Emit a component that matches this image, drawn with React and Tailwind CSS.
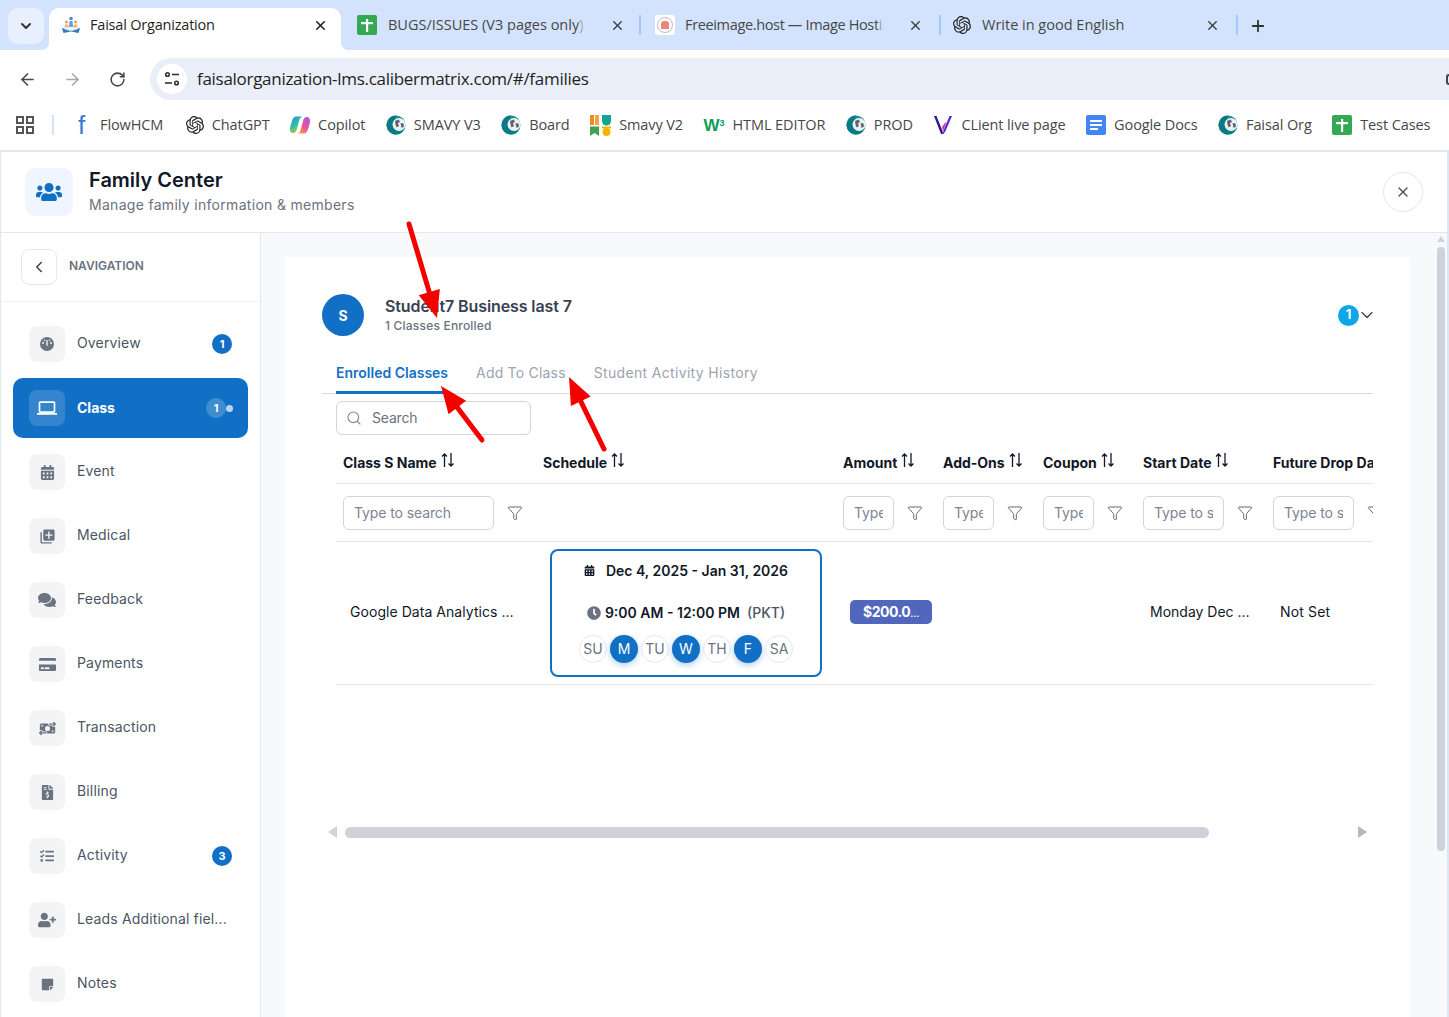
import { ChevronDown, ChevronLeft, ArrowLeft, ArrowRight, RotateCw, X, Plus, Search, Funnel } from "lucide-react";
import {
  FaUsers, FaCalendarAlt, FaComments, FaCreditCard, FaFileInvoiceDollar,
  FaTasks, FaUserPlus, FaStickyNote, FaClock,
} from "react-icons/fa";
import { FaMoneyBillTransfer } from "react-icons/fa6";
import { MdOutlineLaptop, MdLibraryAdd } from "react-icons/md";
import { SiOpenai } from "react-icons/si";

function SheetIcon({ size = 20 }) {
  return (
    <svg width={size} height={size} viewBox="0 0 20 20" className="shrink-0">
      <rect width="20" height="20" rx="2" fill="#34a853" />
      <rect x="9" y="4" width="2.2" height="13" fill="#fff" />
      <rect x="4" y="7" width="12" height="2.2" fill="#fff" />
    </svg>
  );
}

function GlobeIcon() {
  return (
    <svg width="20" height="20" viewBox="0 0 20 20" className="shrink-0">
      <circle cx="10" cy="10" r="9.500" fill="#0f8f98" />
      <path d="M10 .5A9.500 9.500 0 0 0 2 15c1 2 4 4.500 8 4.500 3 0 6-1.500 7.500-4-2 1.500-5 1.800-7 .5-2.500-1.500-3.500-4-3-7 .4-3 1.500-6 2.500-8.500z" fill="#0b7a84" />
      <circle cx="13" cy="9.500" r="6.500" fill="#eef0f1" />
      <path d="M9 6l3.500-1.500 1.500 2-2 2 1 2.500-2.500 1.500-1-3zM14.500 8l3 .5.500 3-2.500 1.500z" fill="#5d666d" />
    </svg>
  );
}

function CopilotIcon() {
  return (
    <svg width="20" height="20" viewBox="0 0 20 20" className="shrink-0">
      <defs>
        <linearGradient id="cpA" x1="0" y1="0" x2="0.6" y2="1">
          <stop offset="0" stopColor="#1f8fe8" />
          <stop offset="0.6" stopColor="#35c2a0" />
          <stop offset="1" stopColor="#f4c20d" />
        </linearGradient>
        <linearGradient id="cpB" x1="1" y1="0" x2="0.3" y2="1">
          <stop offset="0" stopColor="#a35be6" />
          <stop offset="0.6" stopColor="#ee4f9a" />
          <stop offset="1" stopColor="#f59a3c" />
        </linearGradient>
      </defs>
      <path d="M6 1.500h6.500c-1.500.5-2.500 1.500-3 3L7 14c-.6 2.500-1.800 4-4 4-1.800 0-3-1.500-3-4 0-2 1-5 2-8 .8-2.800 2-4.500 4-4.500z" fill="url(#cpA)" />
      <path d="M14 18.500H7.500c1.500-.5 2.500-1.500 3-3L13 6c.6-2.500 1.800-4 4-4 1.800 0 3 1.500 3 4 0 2-1 5-2 8-.8 2.800-2 4.500-4 4.500z" fill="url(#cpB)" />
    </svg>
  );
}

function SmavyV2Icon() {
  return (
    <svg width="21" height="21" viewBox="0 0 21 21" className="shrink-0">
      <rect x="0" y="0" width="4" height="10" fill="#f08a24" />
      <rect x="5" y="0" width="4" height="10" fill="#f4a340" />
      <path d="M12 0h9v6a4.500 4.500 0 0 1-9 0z" fill="#12a594" />
      <path d="M0 11.500h9V21l-4.500-3L0 21z" fill="#3fa34d" />
      <circle cx="16.500" cy="17" r="4" fill="#f4b400" />
      <rect x="12" y="11.500" width="9" height="2" fill="#f4b400" />
    </svg>
  );
}

function VIcon() {
  return (
    <svg width="20" height="20" viewBox="0 0 20 20" className="shrink-0">
      <path d="M1 1h2.500l6 15 .5 3H8z" fill="#2d1a8f" />
      <path d="M9.500 19l2-6 5-12H19l-6.500 15-2 3z" fill="#4f2bd0" />
      <path d="M9 12l3.500-5 .5 1.500-3 8z" fill="#e8338f" />
    </svg>
  );
}

function DocsIcon() {
  return (
    <svg width="20" height="20" viewBox="0 0 20 20" className="shrink-0">
      <rect width="20" height="20" rx="2" fill="#4285f4" />
      <rect x="4" y="5" width="12" height="2" fill="#fff" />
      <rect x="4" y="9" width="12" height="2" fill="#fff" />
      <rect x="4" y="13" width="8" height="2" fill="#fff" />
    </svg>
  );
}

function FaisalLogo() {
  return (
    <svg width="20" height="20" viewBox="0 0 20 20" className="shrink-0">
      <circle cx="10" cy="3.500" r="1.800" fill="#3f8fd6" />
      <path d="M8.500 6h3l.5 6H8z" fill="#5aa3de" />
      <circle cx="5.500" cy="7" r="1.500" fill="#e9a15a" />
      <circle cx="14.500" cy="7" r="1.500" fill="#e9a15a" />
      <path d="M4 9.500h3l1 3H3.500zM13 9.500h3l.5 3H12z" fill="#f0b47a" />
      <path d="M1 13l9 2.500L19 13l-1.500 5-7.500-1.500L2.500 18z" fill="#2f78b8" />
      <path d="M3 13.500l7 2 7-2-.5 1-6.500 2-6.500-2z" fill="#bcd9f0" />
    </svg>
  );
}

function FreeimageIcon() {
  return (
    <div className="w-5 h-5 rounded-[3px] bg-white flex items-center justify-center shrink-0">
      <div className="w-4 h-4 rounded-full border border-[#c9b9b5] flex items-center justify-center">
        <div className="w-2 h-2 rounded-t-[3px] bg-[#e8877c]" />
      </div>
    </div>
  );
}

function SiteInfoIcon() {
  return (
    <svg width="16" height="16" viewBox="0 0 16 16" fill="none" stroke="#333" strokeWidth="1.600">
      <circle cx="3.500" cy="3.500" r="1.800" />
      <path d="M8 3.500h7" />
      <circle cx="12.500" cy="12" r="1.800" />
      <path d="M1 12h7" />
    </svg>
  );
}

// round gauge used for the Overview item
function GaugeIcon({ size, className }) {
  return (
    <svg width={size} height={size} viewBox="0 0 14 14" className={className}>
      <circle cx="7" cy="7" r="7" fill="currentColor" />
      <rect x="6.300" y="3" width="1.400" height="6" rx="0.7" fill="#f3f4f6" />
      <circle cx="3" cy="6" r="1" fill="#f3f4f6" />
      <circle cx="11" cy="6" r="1" fill="#f3f4f6" />
      <circle cx="4.500" cy="3.200" r="0.8" fill="#f3f4f6" />
      <circle cx="9.500" cy="3.200" r="0.8" fill="#f3f4f6" />
    </svg>
  );
}

function Tab({ icon, title, titleClass = "", fade, width, pl, pr, gap }) {
  return (
    <div className={`flex items-center h-[42px] pb-2 mt-2 shrink-0 ${width} ${pl} ${pr} ${gap}`}>
      {icon}
      <span className={`relative flex-1 min-w-0 whitespace-nowrap overflow-hidden text-[14.500px] text-[#474747] ${titleClass}`}>
        {title}
        {fade && <span className="absolute right-0 top-0 bottom-0 w-2 bg-gradient-to-r from-[#d3e3fd00] to-[#d3e3fd]" />}
      </span>
      <X size={15} strokeWidth={2.200} className="text-[#3c3c3c] shrink-0 ml-[14px]" />
    </div>
  );
}

function Bookmark({ icon, label }) {
  return (
    <div className="flex items-center gap-[8px] shrink-0">
      {icon}
      <span className="text-[14.500px] tracking-[-0.1px] text-[#474747] whitespace-nowrap">{label}</span>
    </div>
  );
}

function TabSeparator() {
  return <div className="w-[2px] h-[20px] mt-[15px] bg-[#a8c7fa] shrink-0" />;
}

function BrowserChrome() {
  return (
    <div className="font-['Open_Sans',sans-serif]">
      <div className="h-[50px] bg-[#d3e3fd] flex items-start">
        <div className="w-[36px] h-[36px] ml-2 mt-2 rounded-[10px] bg-[#e9f0fd] flex items-center justify-center shrink-0">
          <ChevronDown size={16} strokeWidth={3} className="text-[#333]" />
        </div>
        {/* active tab joins the toolbar below */}
        <div className="relative w-[292px] h-[42px] mt-2 ml-[5px] bg-white rounded-t-[10px] flex items-center pb-2 pl-[12px] pr-[13px] gap-[9px] shrink-0">
          <span className="absolute left-[-8px] bottom-0 w-2 h-2 bg-[radial-gradient(circle_at_0_0,#d3e3fd_8px,#ffffff_8px)]" />
          <span className="absolute right-[-8px] bottom-0 w-2 h-2 bg-[radial-gradient(circle_at_100%_0,#d3e3fd_8px,#ffffff_8px)]" />
          <FaisalLogo />
          <span className="flex-1 text-[14.500px] tracking-[-0.2px] text-[#1f1f1f] whitespace-nowrap">Faisal Organization</span>
          <X size={15} strokeWidth={2.500} className="text-[#222] shrink-0" />
        </div>
        <Tab width="w-[298px]" pl="pl-[16px]" pr="pr-[14px]" gap="gap-[11px]" fade icon={<SheetIcon />} title="BUGS/ISSUES (V3 pages only) - Google Sheets" />
        <TabSeparator />
        <Tab width="w-[298px]" pl="pl-[14px]" pr="pr-[16px]" gap="gap-[10px]" fade titleClass="tracking-[-0.35px]" icon={<FreeimageIcon />} title="Freeimage.host — Image Hosting" />
        <TabSeparator />
        <Tab width="w-[295px]" pl="pl-[12px]" pr="pr-[16px]" gap="gap-[11px]" icon={<SiOpenai size={18} className="text-[#222] shrink-0" />} title="Write in good English" />
        <TabSeparator />
        <Plus size={18} strokeWidth={2.400} className="text-[#333] mt-[17px] ml-[11px] shrink-0" />
      </div>

      <div className="h-[50px] pt-2 bg-white flex items-center rounded-tl-[10px]">
        <ArrowLeft size={19} strokeWidth={2} className="ml-[18px] text-[#474747] shrink-0" />
        <ArrowRight size={19} strokeWidth={2} className="ml-[26px] text-[#a5a7aa] shrink-0" />
        <RotateCw size={17} strokeWidth={2.200} className="ml-[27px] text-[#474747] shrink-0" />
        <div className="ml-[24px] flex-1 h-[42px] bg-[#e9eef8] rounded-l-[21px] flex items-center pl-[7px]">
          <div className="w-[30px] h-[30px] rounded-full bg-white flex items-center justify-center shrink-0">
            <SiteInfoIcon />
          </div>
          <span className="ml-[10px] text-[17px] tracking-[-0.29px] text-[#1f1f1f] whitespace-nowrap">
            faisalorganization-lms.calibermatrix.com/#/families
          </span>
          <span className="ml-auto w-[3px] h-[11px] rounded-l-full border-2 border-r-0 border-[#444]" />
        </div>
      </div>

      <div className="h-[50px] bg-white flex items-center overflow-hidden">
        <div className="ml-[16px] grid grid-cols-2 gap-[2px] shrink-0">
          <span className="w-[8px] h-[8px] border-2 border-[#555]" />
          <span className="w-[8px] h-[8px] border-2 border-[#555]" />
          <span className="w-[8px] h-[8px] border-2 border-[#555]" />
          <span className="w-[8px] h-[8px] border-2 border-[#555]" />
        </div>
        <div className="ml-[18px] w-[2px] h-[20px] bg-[#d3e3fd] shrink-0" />
        <div className="ml-[17px] flex items-center gap-[20.500px]">
          <Bookmark
            icon={<span className="w-[21px] text-center font-['Liberation_Sans',sans-serif] text-[26px] leading-none text-[#3a7bd5]">f</span>}
            label="FlowHCM"
          />
          <Bookmark icon={<SiOpenai size={18} className="text-[#222] shrink-0 ml-[2px]" />} label="ChatGPT" />
          <Bookmark icon={<CopilotIcon />} label="Copilot" />
          <Bookmark icon={<GlobeIcon />} label="SMAVY V3" />
          <Bookmark icon={<GlobeIcon />} label="Board" />
          <Bookmark icon={<SmavyV2Icon />} label="Smavy V2" />
          <Bookmark
            icon={
              <span className="font-['Liberation_Sans',sans-serif] font-bold text-[17px] leading-none text-[#0f9d58]">
                W<sup className="text-[9px]">3</sup>
              </span>
            }
            label="HTML EDITOR"
          />
          <Bookmark icon={<GlobeIcon />} label="PROD" />
          <Bookmark icon={<VIcon />} label="CLient live page" />
          <Bookmark icon={<DocsIcon />} label="Google Docs" />
          <Bookmark icon={<GlobeIcon />} label="Faisal Org" />
          <Bookmark icon={<SheetIcon />} label="Test Cases" />
          <SheetIcon />
        </div>
      </div>
    </div>
  );
}

const NAV = [
  { label: "Overview", Icon: GaugeIcon, size: 14, badge: "1" },
  { label: "Class", Icon: MdOutlineLaptop, size: 20, badge: "1", active: true },
  { label: "Event", Icon: FaCalendarAlt, size: 15 },
  { label: "Medical", Icon: MdLibraryAdd, size: 17 },
  { label: "Feedback", Icon: FaComments, size: 18 },
  { label: "Payments", Icon: FaCreditCard, size: 17 },
  { label: "Transaction", Icon: FaMoneyBillTransfer, size: 17 },
  { label: "Billing", Icon: FaFileInvoiceDollar, size: 15 },
  { label: "Activity", Icon: FaTasks, size: 14, badge: "3" },
  { label: "Leads Additional fiel...", Icon: FaUserPlus, size: 18 },
  { label: "Notes", Icon: FaStickyNote, size: 13 },
];

function NavItem({ item }) {
  const { Icon, label, badge, active, size } = item;
  if (active) {
    return (
      <div className="h-[60px] ml-[12px] mr-[12px] px-4 rounded-[10px] bg-[#1170c5] flex items-center shrink-0">
        <div className="w-9 h-9 rounded-[8px] bg-[#ffffff26] flex items-center justify-center shrink-0">
          <Icon size={size} className="text-white" />
        </div>
        <span className="ml-3 pb-[2px] text-[14px] font-bold text-white">{label}</span>
        <span className="ml-auto w-5 h-5 rounded-full bg-[#ffffff33] text-white text-[11px] font-bold flex items-center justify-center">{badge}</span>
        <span className="w-[7px] h-[7px] rounded-full bg-[#ffffffb3] mr-[-1px]" />
      </div>
    );
  }
  return (
    <div className="h-[60px] ml-[12px] mr-[12px] px-4 flex items-center shrink-0">
      <div className="w-9 h-9 rounded-[8px] bg-[#f3f4f6] flex items-center justify-center shrink-0">
        <Icon size={size} className="text-[#6b7280]" />
      </div>
      <span className="ml-3 pb-[3px] text-[14px] tracking-[0.15px] text-[#4b5563] whitespace-nowrap">{label}</span>
      {badge && (
        <span className="ml-auto w-5 h-5 rounded-full bg-[#1170c5] text-white text-[11px] font-bold flex items-center justify-center">{badge}</span>
      )}
    </div>
  );
}

function Sidebar() {
  return (
    <aside className="w-[260px] shrink-0 border-r border-[#e5e7eb] bg-white">
      <div className="h-[69px] border-b border-[#f0f1f3] flex items-center pl-[20px]">
        <div className="w-9 h-9 rounded-[8px] border border-[#e5e7eb] flex items-center justify-center">
          <ChevronLeft size={18} className="text-[#374151]" />
        </div>
        <span className="ml-3 pb-[2px] text-[12px] font-semibold text-[#6b7280] uppercase">Navigation</span>
      </div>
      <div className="pt-[12px] flex flex-col gap-1">
        {NAV.map((item) => (
          <NavItem key={item.label} item={item} />
        ))}
      </div>
    </aside>
  );
}

function SortIcon() {
  return (
    <svg width="16" height="16" viewBox="0 0 16 16" fill="none" stroke="#111827" strokeWidth="1.300" className="inline-block shrink-0 -mt-1">
      <path d="M4.500 15V2M2 4.500L4.500 2L7 4.500" />
      <path d="M11 1v13M8.500 11.500L11 14l2.500-2.500" />
    </svg>
  );
}

function HeaderCell({ label, sort = true }) {
  return (
    <th className="px-[7px] pt-[3px] text-left font-bold text-[14px] text-[#111827] whitespace-nowrap overflow-hidden">
      <span className="inline-flex items-center gap-[3px]">
        {label}
        {sort && <SortIcon />}
      </span>
    </th>
  );
}

function FilterCell({ width, placeholder }) {
  return (
    <td className="px-[7px] pt-[2px]">
      <div className="flex items-center">
        <div className={`${width} h-[34px] pb-[2px] rounded-[6px] border border-[#d1d5db] px-[10px] flex items-center overflow-hidden shrink-0`}>
          <span className="text-[14px] tracking-[-0.1px] text-[#7b8494] whitespace-nowrap overflow-hidden">{placeholder}</span>
        </div>
        <Funnel size={16} strokeWidth={1.300} className="ml-[13px] text-[#4b5563] shrink-0" />
      </div>
    </td>
  );
}

function DayDot({ d, on }) {
  return on ? (
    <span className="w-7 h-7 rounded-full bg-[#1170c5] text-white text-[14px] flex items-center justify-center shadow-[0_2px_6px_rgba(17,112,197,0.35)]">{d}</span>
  ) : (
    <span className="w-7 h-7 rounded-full border border-[#e5e7eb] text-[#6b7280] text-[14px] flex items-center justify-center">{d}</span>
  );
}

function ScheduleCard() {
  return (
    <div className="w-[272px] h-[128px] rounded-[8px] border-2 border-[#1170c5] flex flex-col items-center pt-[10px]">
      <div className="flex items-center gap-[11px] text-[14px] font-semibold text-[#111827] h-5">
        <FaCalendarAlt size={11} />
        <span>Dec 4, 2025 - Jan 31, 2026</span>
      </div>
      <div className="mt-[22px] flex items-center gap-[4px] text-[14px] font-semibold text-[#111827] h-5">
        <FaClock size={14} className="text-[#6b7280]" />
        <span>9:00 AM - 12:00 PM</span>
        <span className="ml-[3px] font-medium text-[#4b5563]">(PKT)</span>
      </div>
      <div className="mt-[12px] flex gap-[3px]">
        <DayDot d="SU" />
        <DayDot d="M" on />
        <DayDot d="TU" />
        <DayDot d="W" on />
        <DayDot d="TH" />
        <DayDot d="F" on />
        <DayDot d="SA" />
      </div>
    </div>
  );
}

function ClassTable() {
  return (
    <div className="overflow-hidden">
      <table className="table-fixed border-collapse w-[1100px]">
        <colgroup>
          <col className="w-[200px]" />
          <col className="w-[300px]" />
          <col className="w-[100px]" />
          <col className="w-[100px]" />
          <col className="w-[100px]" />
          <col className="w-[130px]" />
          <col className="w-[170px]" />
        </colgroup>
        <thead>
          <tr className="h-[44px] border-b border-[#e5e7eb]">
            <HeaderCell label="Class S Name" />
            <HeaderCell label="Schedule" />
            <HeaderCell label="Amount" />
            <HeaderCell label="Add-Ons" />
            <HeaderCell label="Coupon" />
            <HeaderCell label="Start Date" />
            <HeaderCell label="Future Drop Date" sort={false} />
          </tr>
          <tr className="h-[58px] border-b border-[#e5e7eb]">
            <FilterCell width="w-[151px]" placeholder="Type to search" />
            <td />
            <FilterCell width="w-[51px]" placeholder="Type to search" />
            <FilterCell width="w-[51px]" placeholder="Type to search" />
            <FilterCell width="w-[51px]" placeholder="Type to search" />
            <FilterCell width="w-[81px]" placeholder="Type to search" />
            <FilterCell width="w-[81px]" placeholder="Type to search" />
          </tr>
        </thead>
        <tbody>
          <tr className="h-[143px] border-b border-[#e5e7eb]">
            <td className="pl-[14px] pr-[7px] pb-[2px] text-[14px] tracking-[0.05px] text-[#111827] whitespace-nowrap">Google Data Analytics ...</td>
            <td className="px-[14px]">
              <ScheduleCard />
            </td>
            <td className="px-[14px]">
              <div className="w-[82px] h-6 mb-[2px] pl-[13px] rounded-[5px] bg-[#5166bd] text-white font-bold text-[14px] tracking-[-0.5px] leading-6 whitespace-nowrap">
                $200.0<span className="text-[9px] tracking-[0px]">...</span>
              </div>
            </td>
            <td />
            <td />
            <td className="pl-[14px] pb-[2px] text-[14px] text-[#111827] whitespace-nowrap">Monday Dec ...</td>
            <td className="pl-[14px] pb-[2px] text-[14px] tracking-[0.15px] text-[#111827] whitespace-nowrap">Not Set</td>
          </tr>
        </tbody>
      </table>
    </div>
  );
}

function HScrollbar() {
  return (
    <div className="mt-[142px] flex items-center h-[11px] ml-[-8px] mr-[6px]">
      <span className="w-0 h-0 border-y-[6px] border-y-transparent border-r-[9px] border-r-[#d1d5db] shrink-0" />
      <div className="ml-2 w-[864px] h-[11px] rounded-full bg-[#cfd2da] shrink-0" />
      <span className="ml-auto w-0 h-0 border-y-[6px] border-y-transparent border-l-[9px] border-l-[#b4b9c2] shrink-0" />
    </div>
  );
}

function Arrow({ x1, y1, x2, y2 }) {
  const dx = x2 - x1;
  const dy = y2 - y1;
  const len = Math.hypot(dx, dy);
  const ux = dx / len;
  const uy = dy / len;
  const bx = x2 - ux * 27;
  const by = y2 - uy * 27;
  const pts = `${x2},${y2} ${bx - uy * 11},${by + ux * 11} ${bx + uy * 11},${by - ux * 11}`;
  return (
    <svg className="absolute left-0 top-0 pointer-events-none" width="1449" height="1017">
      <line x1={x1} y1={y1} x2={bx} y2={by} stroke="#f30000" strokeWidth="5" strokeLinecap="round" />
      <polygon points={pts} fill="#f30000" />
    </svg>
  );
}

function MainPanel() {
  return (
    <main className="flex-1 min-w-0 bg-[#f8f9fb] pl-[24px] pt-[24px] flex">
      <div className="w-[1125px] bg-white pl-[37px] pr-[37px] shrink-0 self-stretch">
        <div className="mt-[37px] h-[42px] flex items-center">
          <div className="w-[42px] h-[42px] rounded-full bg-[#1170c5] text-white font-bold text-[14px] flex items-center justify-center">S</div>
          <div className="ml-[21px] mt-[-1px]">
            <div className="text-[16px] font-semibold tracking-[-0.1px] text-[#374151] leading-[22px]">Student7 Business last 7</div>
            <div className="text-[12px] font-medium tracking-[0.2px] text-[#6b7280] leading-[16px] mt-[1px]">1 Classes Enrolled</div>
          </div>
          <div className="ml-auto flex items-center mr-[-4px]">
            <span className="w-[21px] h-[21px] rounded-full bg-[#0ea5e9] text-white text-[13px] font-bold flex items-center justify-center">1</span>
            <ChevronDown size={20} strokeWidth={1.500} className="text-[#374151] -ml-[2px]" />
          </div>
        </div>

        <div className="mt-[21px] h-[37px] border-b border-[#d9dce1] flex items-start pl-[14px] gap-[28px] text-[14px] text-[#9ca3af]">
          <div className="h-[37px] pt-[5px] border-b-[3px] border-[#1170c5] text-[#1170c5] font-semibold whitespace-nowrap">Enrolled Classes</div>
          <div className="pt-[5px] tracking-[0.2px] whitespace-nowrap">Add To Class</div>
          <div className="pt-[5px] tracking-[0.33px] whitespace-nowrap">Student Activity History</div>
        </div>

        <div className="mt-[7px] ml-[14px] w-[195px] h-[34px] rounded-[6px] border border-[#d1d5db] flex items-center pl-[9px]">
          <Search size={16} strokeWidth={1.700} className="text-[#7b8794]" />
          <span className="ml-[10px] pb-[2px] text-[14px] tracking-[-0.2px] text-[#6b7280]">Search</span>
        </div>

        <div className="ml-[14px] mt-[4px]">
          <ClassTable />
          <HScrollbar />
        </div>
      </div>
      <div className="ml-auto w-[9px] mr-[2px] -mt-[21px] flex flex-col items-center shrink-0">
        <span className="w-0 h-0 border-x-[4.500px] border-x-transparent border-b-[6px] border-b-[#cfd2da]" />
        <div className="mt-[5px] w-[8px] h-[604px] rounded-full bg-[#cfd2da]" />
      </div>
    </main>
  );
}

export default function App() {
  return (
    <div className="relative w-[1449px] h-[1017px] overflow-hidden bg-white flex flex-col font-['Inter',sans-serif]">
      <BrowserChrome />
      <div className="border-t-2 border-l border-r-2 border-t-[#e3e7ea] border-l-[#dfe6f0] border-r-[#dbe6f5] flex-1 min-h-0 flex flex-col">
        <header className="h-[81px] border-b border-[#e5e7eb] flex items-center pl-[24px] pr-[24px] shrink-0">
          <div className="w-12 h-12 rounded-[10px] bg-[#eff6ff] flex items-center justify-center">
            <FaUsers size={26} className="text-[#1170c5]" />
          </div>
          <div className="ml-4">
            <div className="text-[20px] font-semibold text-[#111827] leading-[26px] mt-[-3px]">Family Center</div>
            <div className="text-[14px] tracking-[0.3px] text-[#6b7280] leading-[20px] mt-[2px]">Manage family information &amp; members</div>
          </div>
          <div className="ml-auto w-10 h-10 rounded-full border border-[#e5e7eb] flex items-center justify-center">
            <X size={16} strokeWidth={2} className="text-[#4b5563]" />
          </div>
        </header>
        <div className="flex-1 min-h-0 flex">
          <Sidebar />
          <MainPanel />
        </div>
      </div>
      <Arrow x1={409} y1={224} x2={437} y2={318} />
      <Arrow x1={482} y1={440} x2={441} y2={386} />
      <Arrow x1={604} y1={449} x2={569} y2={377} />
    </div>
  );
}
